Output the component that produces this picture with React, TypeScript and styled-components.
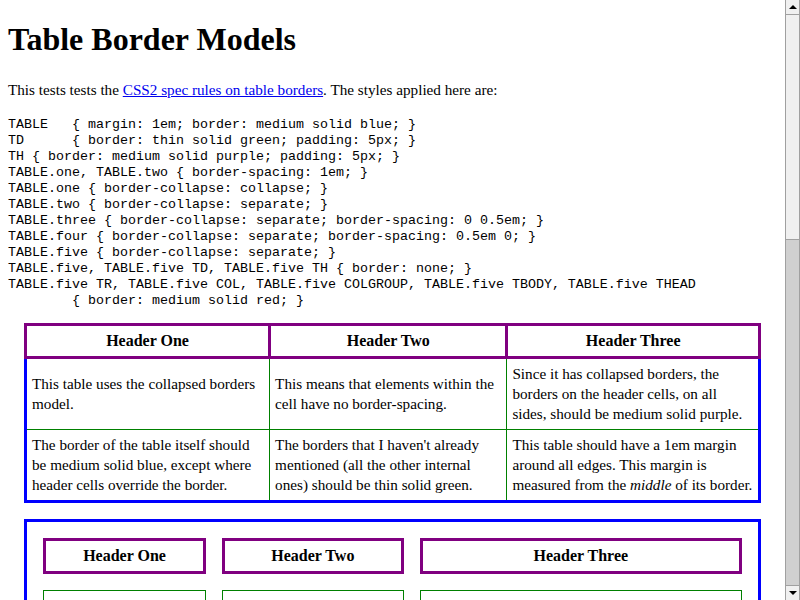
import React from "react";
import styled, { createGlobalStyle } from "styled-components";

const GlobalStyle = createGlobalStyle`
  html, body {
    margin: 0;
    padding: 0;
    background: #fff;
    overflow: hidden;
  }
  body {
    font-family: "Liberation Serif", "Times New Roman", serif;
    font-size: 16px;
    color: #000;
  }
`;

const styleRules = `TABLE   { margin: 1em; border: medium solid blue; }
TD      { border: thin solid green; padding: 5px; }
TH { border: medium solid purple; padding: 5px; }
TABLE.one, TABLE.two { border-spacing: 1em; }
TABLE.one { border-collapse: collapse; }
TABLE.two { border-collapse: separate; }
TABLE.three { border-collapse: separate; border-spacing: 0 0.5em; }
TABLE.four { border-collapse: separate; border-spacing: 0.5em 0; }
TABLE.five { border-collapse: separate; }
TABLE.five, TABLE.five TD, TABLE.five TH { border: none; }
TABLE.five TR, TABLE.five COL, TABLE.five COLGROUP, TABLE.five TBODY, TABLE.five THEAD
        { border: medium solid red; }`;

type Model = "collapse" | "separate";

type TableData = {
  model: Model;
  rows: React.ReactNode[][];
};

const headers = ["Header One", "Header Two", "Header Three"];

const tables: TableData[] = [
  {
    model: "collapse",
    rows: [
      [
        "This table uses the collapsed borders model.",
        "This means that elements within the cell have no border-spacing.",
        "Since it has collapsed borders, the borders on the header cells, on all sides, should be medium solid purple.",
      ],
      [
        "The border of the table itself should be medium solid blue, except where header cells override the border.",
        "The borders that I haven't already mentioned (all the other internal ones) should be thin solid green.",
        <>
          This table should have a 1em margin around all edges. This margin is
          measured from the <em>middle</em> of its border.
        </>,
      ],
    ],
  },
  {
    model: "separate",
    rows: [
      [
        "This table uses the separated borders model.",
        "This means that elements within the cell have border-spacing of 1em.",
        "The borders on the header cells, on all sides, should be medium solid purple.",
      ],
      [
        "The border of the table itself should be medium solid blue.",
        "The borders of other cells should be thin solid green.",
        <>
          This table should have a 1em margin around all edges. This margin is
          measured from the <em>border edge</em> of the table, and the cells
          are 1em apart.
        </>,
      ],
    ],
  },
];

const App = () => {
  return (
    <>
      <GlobalStyle />
      <Screen>
        <Page>
          <Title>Table Border Models</Title>
          <Intro>
            This tests tests the{" "}
            <SpecLink href="#tables-borders">CSS2 spec rules on table borders</SpecLink>
            . The styles applied here are:
          </Intro>
          <Rules>{styleRules}</Rules>

          {tables.map((t, i) => (
            <TestTable key={i} $model={t.model}>
              <thead>
                <tr>
                  {headers.map((h) => (
                    <HeadCell key={h}>{h}</HeadCell>
                  ))}
                </tr>
              </thead>
              <tbody>
                {t.rows.map((row, r) => (
                  <tr key={r}>
                    {row.map((cell, c) => (
                      <Cell key={c}>{cell}</Cell>
                    ))}
                  </tr>
                ))}
              </tbody>
            </TestTable>
          ))}
        </Page>

        <Scrollbar>
          <ScrollButton>
            <Arrow $dir="up" />
          </ScrollButton>
          <ScrollThumb />
          <ScrollTrack />
          <ScrollButton>
            <Arrow $dir="down" />
          </ScrollButton>
        </Scrollbar>
      </Screen>
    </>
  );
};

export default App;

const Screen = styled.div`
  display: flex;
  height: 600px;
  overflow: hidden;
`;

const Page = styled.div`
  flex: 1;
  min-width: 0;
  padding: 0 8px;
  overflow: hidden;
`;

const Title = styled.h1`
  font-size: 32px;
  font-weight: bold;
  margin: 21px 0 23px;
`;

const Intro = styled.p`
  font-size: 15.2px;
  margin: 0 0 18px;
`;

const SpecLink = styled.a`
  color: #0000ee;
  text-decoration: underline;
`;

const Rules = styled.pre`
  font-family: "Liberation Mono", "Courier New", monospace;
  font-size: 13.333px;
  line-height: 16px;
  margin: 0 0 -2px;
`;

const TestTable = styled.table<{ $model: Model }>`
  margin: 16px;
  border: 3px solid blue;
  border-collapse: ${(p) => p.$model};
  border-spacing: 16px;
`;

const HeadCell = styled.th`
  border: 3px solid purple;
  padding: 5px;
  font-weight: bold;
  line-height: 20px;
`;

const Cell = styled.td`
  border: 1px solid green;
  padding: 5px;
  font-size: 15.2px;
  line-height: 20px;
  vertical-align: middle;
`;

const Scrollbar = styled.div`
  width: 15px;
  display: flex;
  flex-direction: column;
  background: #d0d0d0;
  box-sizing: border-box;
  border-left: 1px solid #a0a0a0;
  border-right: 1px solid #a0a0a0;
`;

const ScrollButton = styled.div`
  height: 15px;
  box-sizing: border-box;
  background: #f0f0f0;
  border-top: 1px solid #a0a0a0;
  border-bottom: 1px solid #a0a0a0;
  display: flex;
  align-items: center;
  justify-content: center;
  &:first-child {
    border-top: none;
  }
  &:last-child {
    border-bottom: none;
  }
`;

const ScrollThumb = styled.div`
  height: 225px;
  box-sizing: border-box;
  background: #f0f0f0;
  border-bottom: 1px solid #a0a0a0;
`;

const ScrollTrack = styled.div`
  flex: 1;
`;

const Arrow = styled.span<{ $dir: "up" | "down" }>`
  width: 0;
  height: 0;
  border-left: 4px solid transparent;
  border-right: 4px solid transparent;
  ${(p) =>
    p.$dir === "up"
      ? "border-bottom: 4px solid #000;"
      : "border-top: 4px solid #000;"}
`;
